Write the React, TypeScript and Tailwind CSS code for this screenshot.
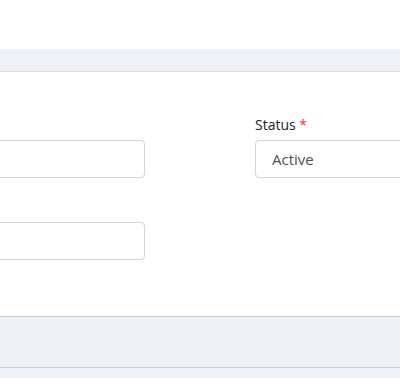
export default function App() {
  return (
    <div className="h-[378px] w-[400px] overflow-hidden bg-white font-['Open_Sans',sans-serif] text-[#212529]">
      <div className="h-[49px] bg-white" />
      <div className="h-[23px] border-b border-[#dcdde2] bg-[#f0f1f6]" />
      <div className="flex h-[244px] pt-[68px]">
        <div className="-ml-[200px] flex w-[345px] shrink-0 flex-col gap-[44px]">
          <div className="h-[38px] rounded border border-[#ced4da] bg-white" />
          <div className="h-[38px] rounded border border-[#ced4da] bg-white" />
        </div>
        <div className="ml-[110px] w-[300px] shrink-0 -mt-[25px]">
          <label className="mb-[5px] block text-[14px] leading-[20px]">
            Status <span className="text-[#e53935]">*</span>
          </label>
          <div className="flex h-[38px] items-center rounded border border-[#ced4da] bg-white pl-4 text-[15px] text-[#495057]">
            Active
          </div>
        </div>
      </div>
      <div className="h-[52px] border-y border-[#c5d0d8] bg-[#eef1f4]" />
      <div className="h-[10px] bg-[#f0f1f6]" />
    </div>
  );
}
